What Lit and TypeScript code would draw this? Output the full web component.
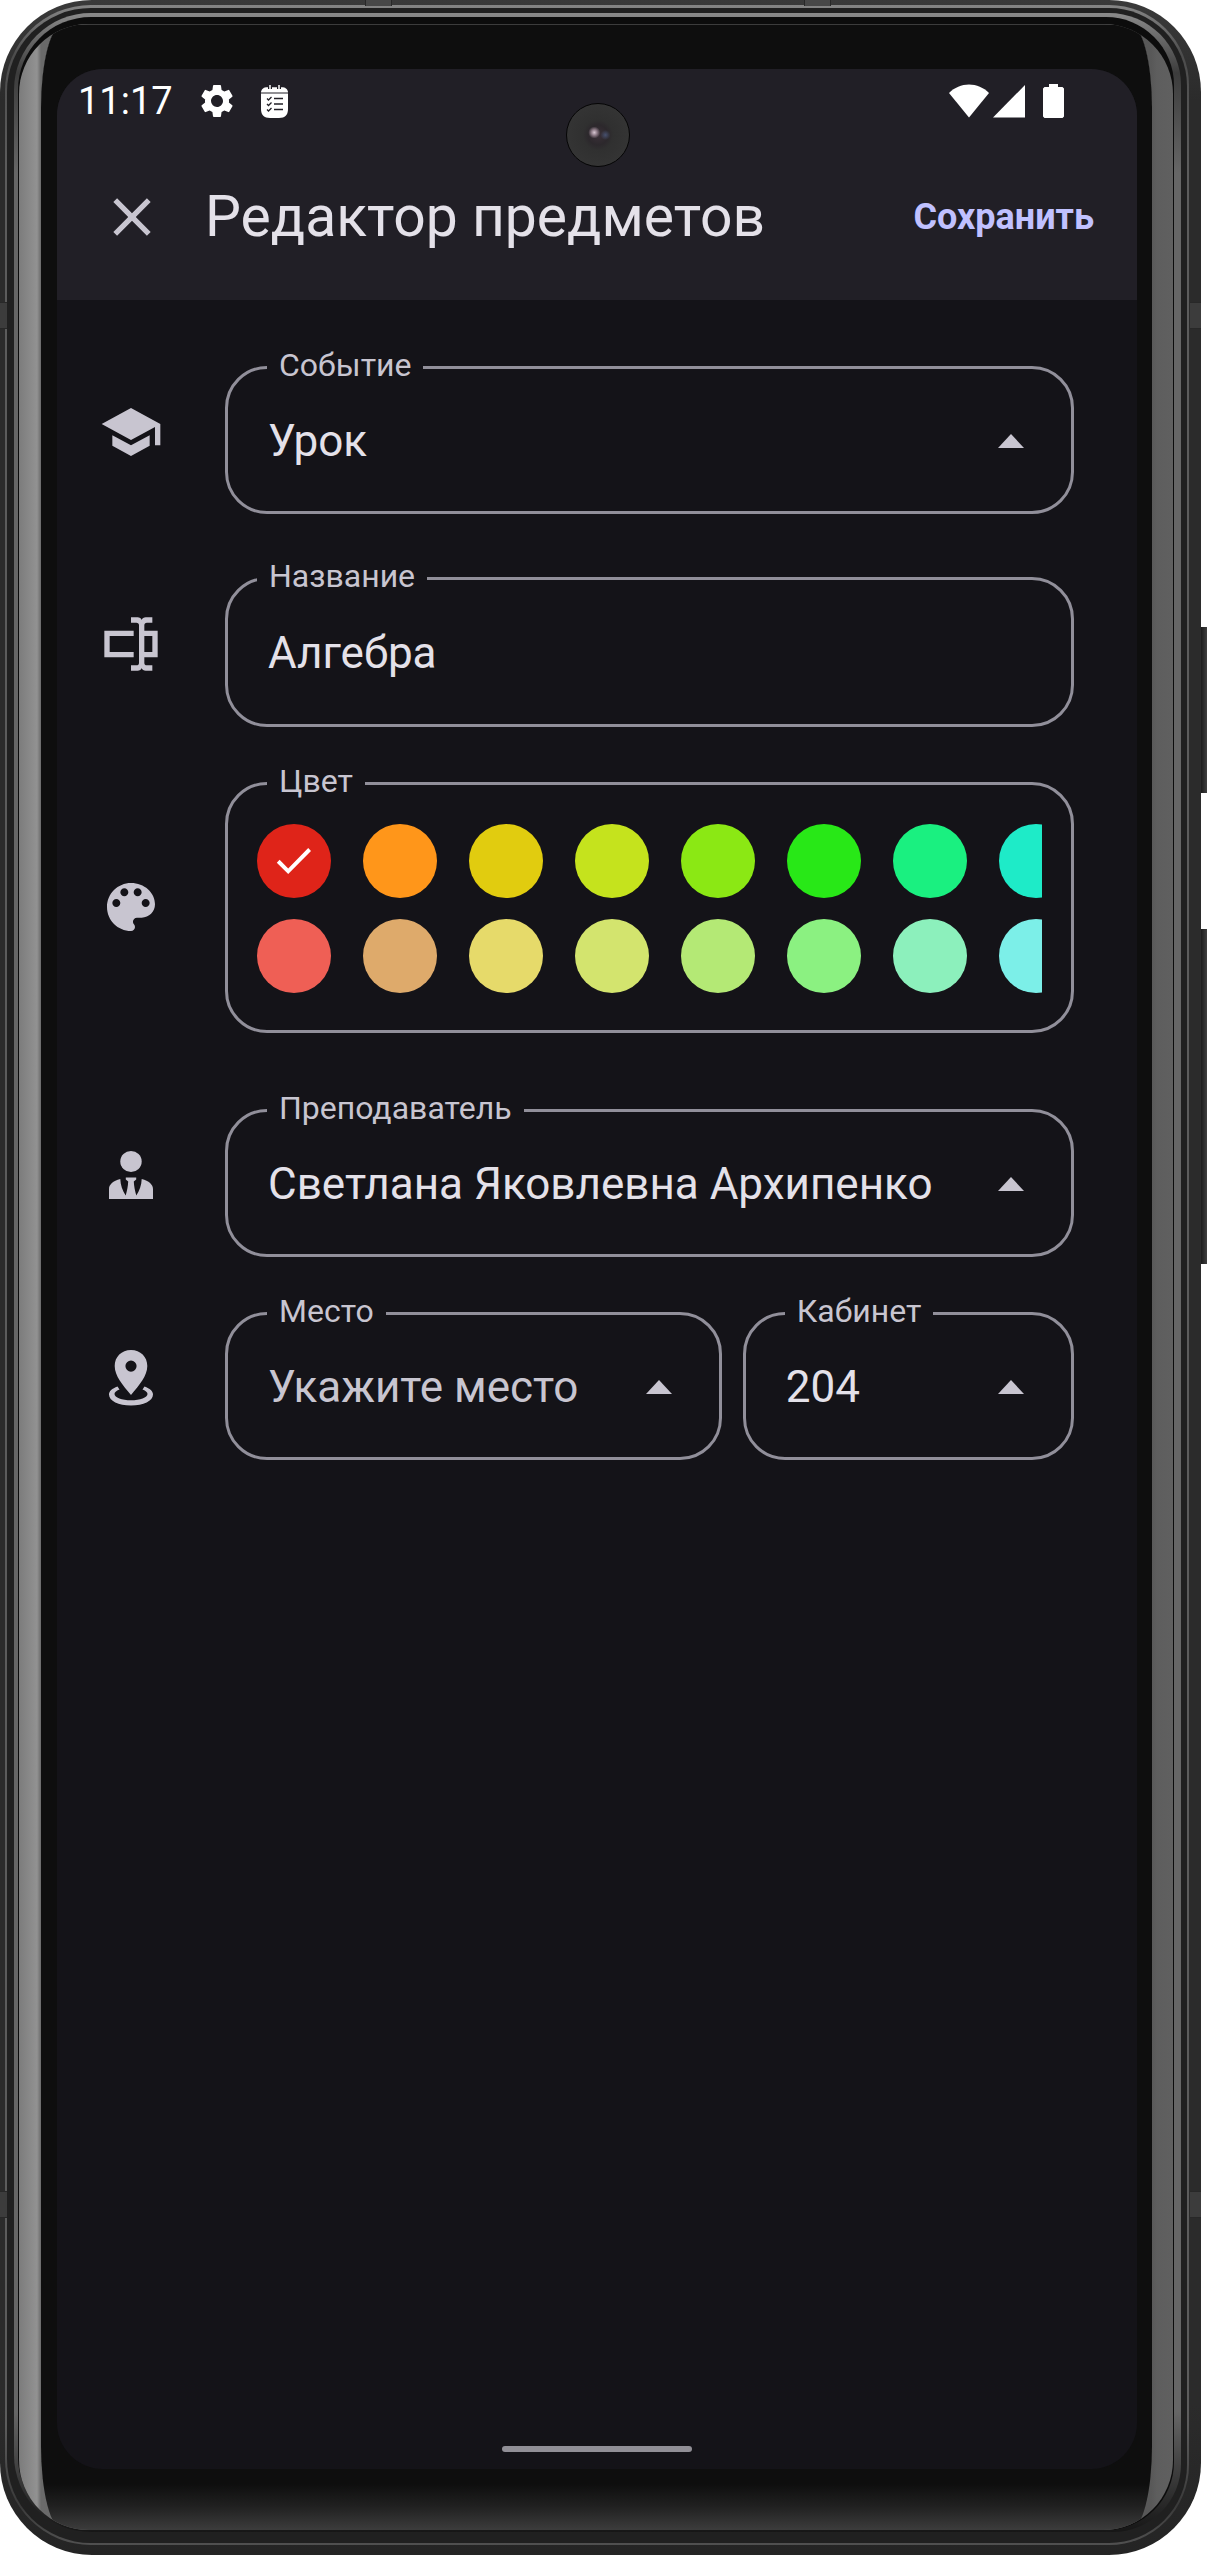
import { LitElement, html, css, svg, TemplateResult } from "lit";
import { customElement, state } from "lit/decorators.js";

const BRIGHT = ["#df2419", "#ff961a", "#e1cc0f", "#c5e31d", "#8be814", "#28e817", "#1af080", "#1eebc8"];
const PASTEL = ["#ef5f55", "#deaa6b", "#e6da6a", "#d3e46e", "#b4e975", "#8bf181", "#8cf0bc", "#7cefe8"];

const icons = {
  school: svg`<path d="M5 13.18v4L12 21l7-3.82v-4L12 17l-7-3.82zM12 3L1 9l11 6 9-4.91V17h2V9L12 3z"/>`,
  textbox: svg`<path d="M17 7h5v10h-5v2a1 1 0 0 0 1 1h2v2h-2.500C16.950 22 16 21.550 16 21c0 .550-.950 1-1.500 1H12v-2h2a1 1 0 0 0 1-1V5a1 1 0 0 0-1-1h-2V2h2.500C15.050 2 16 2.450 16 3c0-.550.950-1 1.500-1H20v2h-2a1 1 0 0 0-1 1v2M2 7h11v2H4v6h9v2H2V7m18 8V9h-3v6h3z"/>`,
  palette: svg`<path d="M12 3c-4.970 0-9 4.030-9 9s4.030 9 9 9c.830 0 1.500-.670 1.500-1.500 0-.390-.150-.740-.390-1.010-.230-.260-.380-.610-.380-.990 0-.830.670-1.500 1.500-1.500H16c2.760 0 5-2.240 5-5 0-4.420-4.030-8-9-8zm-5.500 9c-.830 0-1.500-.670-1.500-1.500S5.670 9 6.500 9 8 9.670 8 10.500 7.330 12 6.500 12zm3-4C8.670 8 8 7.330 8 6.500S8.670 5 9.500 5s1.500.670 1.500 1.500S10.330 8 9.500 8zm5 0c-.830 0-1.500-.670-1.500-1.500S13.670 5 14.500 5s1.500.670 1.500 1.500S15.330 8 14.500 8zm3 4c-.830 0-1.500-.670-1.500-1.500S16.670 9 17.500 9s1.500.670 1.500 1.500-.670 1.500-1.500 1.500z"/>`,
};

@customElement("app-root")
export class AppRoot extends LitElement {
  @state() private color = BRIGHT[0];

  static styles = css`
    :host {
      display: flex;
      min-height: 100vh;
      background: #fff;
      font-family: Roboto, "Liberation Sans", sans-serif;
      color: #e4e1e9;
    }
    * { box-sizing: border-box; }
    svg { display: block; fill: currentColor; flex: none; }

    .shell, .rim-line, .rim-dark, .rim-light, .rim-seam, .glass, .bezel, .screen {
      flex: 1;
      min-width: 0;
      display: flex;
    }
    .shell {
      position: relative;
      margin-right: 6px;
      padding: 5px 12px 10px 5px;
      border-radius: 92px;
      background: linear-gradient(#3a3a3a, #2b2b2b 100px, #2b2b2b calc(100% - 150px), #242424);
    }
    .rim-line {
      padding: 3px 2px 2px;
      border-radius: 86px 80px 80px 86px;
      background: linear-gradient(#858585, #4c4c4c 50px, #5c5c5c 160px, #5c5c5c calc(100% - 120px), #3a3a3a calc(100% - 40px), #505050);
    }
    .rim-dark {
      padding: 5px 6px 11px 7px;
      border-radius: 84px 78px 78px 84px;
      background: #202020;
    }
    .rim-light {
      padding: 4px 7px 2px 4px;
      border-radius: 77px 72px 68px 77px;
      background: linear-gradient(#8a8a8a, #3c3c3c 60px, #666 160px, #666 calc(100% - 120px), #161616);
    }
    .rim-seam {
      padding: 7px 1px 0;
      border-radius: 73px 68px 68px 73px;
      background: #0c0c0c;
    }
    .glass {
      padding: 0 21px 0 22px;
      border-radius: 70px;
      overflow: hidden;
      background: linear-gradient(90deg, #7c7c7c, #929292 18px, #6a6a6a 22px, #585858 calc(100% - 22px), #5e5e5e calc(100% - 16px), #606060);
    }
    .bezel {
      padding: 44px 15px 61px 16px;
      border-top: 1px solid #3c3c3c;
      border-radius: 22px / 84px;
      background: linear-gradient(#0e0e0e calc(100% - 46px), #202020 calc(100% - 24px), #3c3c3c);
    }
    .screen {
      flex-direction: column;
      position: relative;
      border-radius: 46px;
      overflow: hidden;
      background: #141318;
    }

    .side-key {
      position: absolute;
      left: 100%;
      width: 6px;
      background: linear-gradient(90deg, #1c1c1c, #404040);
    }
    .power { top: 627px; height: 166px; }
    .volume { top: 929px; height: 335px; }
    .band {
      position: absolute;
      background: #3c3c3c;
      border: 1px solid #282828;
    }
    .band-v { width: 7px; height: 27px; border-width: 1px 0; }
    .band-h { top: 0; width: 27px; height: 6px; background: #484848; border-width: 0 1px; }
    .at-left { left: 0; }
    .at-right { right: 0; width: 11px; }
    .upper { top: 302px; }
    .lower { bottom: 337px; }
    .near { left: 365px; }
    .far { right: 370px; }

    .camera {
      position: absolute;
      top: 34px;
      left: 50%;
      width: 64px;
      height: 64px;
      margin-left: -31px;
      border: 1px solid #050505;
      border-radius: 50%;
      background:
        radial-gradient(circle at 44% 46%, #d8c8d4 0, #8a7884 3px, transparent 6px),
        radial-gradient(circle at 62% 50%, #46506e 0, transparent 5px),
        radial-gradient(circle, #3a3038 0, #2c282c 10px, #303030 15px, #343434 31px);
    }

    .top { background: #211f26; }
    .status {
      display: flex;
      align-items: center;
      height: 64px;
      padding: 0 73px 0 21px;
      color: #fff;
      font-size: 38px;
      line-height: 44px;
    }
    .status .gear { margin-left: 24px; }
    .status .list { margin-left: 24px; }
    .status .wifi { margin-left: auto; }
    .status .battery { margin-left: 18px; }
    .status .signal { margin-left: 4px; }
    .appbar {
      display: flex;
      align-items: center;
      height: 167px;
      padding: 0 43px;
    }
    button {
      padding: 0;
      border: 0;
      background: none;
      font: inherit;
      cursor: pointer;
    }
    .close { color: #c8c5d0; }
    h1 {
      flex: 1;
      margin: 0 0 0 41px;
      font-size: 57px;
      line-height: 68px;
      font-weight: 400;
    }
    .save {
      color: #c0c1ff;
      font-size: 36px;
      line-height: 44px;
      font-weight: 700;
    }

    form { padding: 49px 63px 0 0; }
    .row {
      display: flex;
      align-items: center;
      gap: 20px;
      margin-bottom: 38px;
    }
    .row.first { margin-bottom: 46px; }
    .row.colors { margin-bottom: 59px; }
    .row.colors .lead { padding-top: 16px; }
    .lead {
      display: flex;
      justify-content: center;
      flex: none;
      width: 148px;
      color: #c8c5d0;
    }
    .fields { display: grid; flex: 1; min-width: 0; gap: 21px; }
    .fields.split { grid-template-columns: 3fr 2fr; }
    fieldset {
      min-width: 0;
      margin: 0;
      padding: 0 29px 15px;
      border: 3px solid #918f9a;
      border-radius: 42px;
    }
    legend {
      margin-left: 10px;
      padding: 0 12px 4px;
      color: #c8c5d0;
      font-size: 32px;
      line-height: 33px;
    }
    .name legend { margin-left: 0; }
    .control { display: grid; align-items: center; }
    .control > * { grid-area: 1 / 1; }
    .control svg {
      justify-self: end;
      margin-right: 18px;
      color: #c8c5d0;
      pointer-events: none;
    }
    select, input.text {
      appearance: none;
      width: 100%;
      height: 110px;
      margin: 0;
      padding: 0 0 0 11px;
      border: 0;
      outline: 0;
      background: none;
      color: #e4e1e9;
      font-family: inherit;
      font-size: 44px;
      line-height: 50px;
    }
    input.text { height: 112px; }
    select.empty { color: #c8c5d0; }
    .swatches {
      display: grid;
      grid-template-columns: repeat(8, 74px);
      gap: 21px 32px;
      padding: 22px 0;
      overflow-x: auto;
      scrollbar-width: none;
    }
    .swatch {
      display: grid;
      place-items: center;
      height: 74px;
      border-radius: 50%;
      color: #fff;
      cursor: pointer;
    }
    .swatch > * { grid-area: 1 / 1; }
    .swatch input {
      appearance: none;
      width: 74px;
      height: 74px;
      margin: 0;
      border-radius: 50%;
    }
    .home {
      width: 190px;
      height: 6px;
      margin: auto auto 17px;
      border-radius: 3px;
      background: #918f96;
    }
  `;

  private selectField(id: string, label: string, value: string, empty = false) {
    return html`<fieldset>
      <legend><label for=${id}>${label}</label></legend>
      <div class="control">
        <select id=${id} class=${empty ? "empty" : ""}>
          <option>${value}</option>
        </select>
        <svg width="26" height="14" viewBox="0 0 26 14"><path d="M0 14L13 0l13 14z"/></svg>
      </div>
    </fieldset>`;
  }

  private icon(shape: TemplateResult | unknown) {
    return html`<div class="lead">
      <svg width="64" height="64" viewBox="0 0 24 24" aria-hidden="true">${shape}</svg>
    </div>`;
  }

  private swatch(c: string) {
    return html`<label class="swatch" style="background:${c}">
      <input type="radio" name="color" aria-label=${c} .checked=${this.color === c}
        @change=${() => (this.color = c)} />
      ${this.color === c
        ? html`<svg width="36" height="28" viewBox="0 0 36 28"><path d="M12.200 21.400L3.600 12.800L.800 15.700L12.200 27L35 3.900L32.200 1z"/></svg>`
        : ""}
    </label>`;
  }

  private statusBar() {
    return html`<div class="status">
      <span>11:17</span>
      <svg class="gear" width="40" height="40" viewBox="0 0 24 24"><path d="M19.140 12.940c.040-.300.060-.610.060-.940 0-.320-.020-.640-.070-.940l2.030-1.580a.490.490 0 0 0 .120-.610l-1.920-3.320a.488.488 0 0 0-.590-.220l-2.390.960c-.500-.380-1.030-.700-1.620-.940L14.400 2.810a.484.484 0 0 0-.480-.410h-3.840c-.240 0-.430.170-.470.410L9.250 5.350c-.590.240-1.130.570-1.620.940L5.240 5.330a.480.480 0 0 0-.590.220L2.740 8.870c-.120.210-.080.470.120.610l2.030 1.580c-.050.300-.090.630-.090.940s.020.640.070.940l-2.030 1.580a.490.490 0 0 0-.120.610l1.920 3.320c.120.220.370.290.590.220l2.390-.960c.500.380 1.030.700 1.620.940l.360 2.540c.050.240.240.410.480.410h3.840c.240 0 .440-.170.470-.410l.360-2.540c.590-.240 1.130-.560 1.620-.940l2.390.960c.220.080.470 0 .590-.220l1.920-3.320a.470.470 0 0 0-.120-.610l-2.010-1.580zM12 15.600A3.610 3.610 0 0 1 8.400 12c0-1.980 1.620-3.600 3.600-3.600s3.600 1.620 3.600 3.600-1.620 3.600-3.600 3.600z"/></svg>
      <svg class="list" width="27" height="33" viewBox="0 0 27 33">
        <path d="M0 7.500C0 5 2 2.500 5 2.200h17c3 .300 5 2.800 5 5.300z"/>
        <path d="M0 8.500h27V24c0 6-3 9-9 9H9c-6 0-9-3-9-9z"/>
        <path d="M9 0v4M18 0v4" stroke="#211f26" stroke-width="4"/>
        <path d="M9 0v4.500M18 0v4.500" stroke="#fff" stroke-width="1.500"/>
        <path d="M13 13.500h9M13 19h9M13 24.500h9M6 13.500l1.500 1.500L10.500 12M6 19l1.500 1.500 3-3M6 24.500L7.500 26l3-3" fill="none" stroke="#211f26" stroke-width="1.300"/>
      </svg>
      <svg class="wifi" width="40" height="34" viewBox="0 0 40 34"><path d="M20 33.500L0 9C5.500 3.500 12.500.500 20 .500S34.500 3.500 40 9z"/></svg>
      <svg class="signal" width="32" height="34" viewBox="0 0 32 34"><path d="M0 33.500L32 1v32.500z"/></svg>
      <svg class="battery" width="21" height="34" viewBox="0 0 21 34"><path d="M6 0h9v3h4.500L21 4.500v28L19.500 34h-18L0 32.500v-28L1.500 3H6z"/></svg>
    </div>`;
  }

  private editor() {
    return html`<form @submit=${(e: Event) => e.preventDefault()}>
      <div class="row first">
        ${this.icon(icons.school)}
        <div class="fields">${this.selectField("event", "Событие", "Урок")}</div>
      </div>
      <div class="row">
        ${this.icon(icons.textbox)}
        <div class="fields">
          <fieldset class="name">
            <legend><label for="name">Название</label></legend>
            <div class="control"><input class="text" id="name" type="text" value="Алгебра" /></div>
          </fieldset>
        </div>
      </div>
      <div class="row colors">
        ${this.icon(icons.palette)}
        <div class="fields">
          <fieldset>
            <legend>Цвет</legend>
            <div class="swatches">${[...BRIGHT, ...PASTEL].map((c) => this.swatch(c))}</div>
          </fieldset>
        </div>
      </div>
      <div class="row">
        <div class="lead">
          <svg width="44" height="48" viewBox="0 0 44 48" aria-hidden="true">
            <ellipse cx="22" cy="10.500" rx="10.700" ry="10.500"/>
            <path d="M0 48V38c0-4.500 4-8 11.300-10C11.500 34 13.500 40 16.700 44.500c1.300-4.500 2.300-9.500 2.500-14L16.800 28.500v-2h10.400v2l-2.400 2c.200 4.500 1.200 9.500 2.500 14C30.500 40 32.500 34 32.700 28 40 30 44 33.500 44 38v10z"/>
          </svg>
        </div>
        <div class="fields">${this.selectField("teacher", "Преподаватель", "Светлана Яковлевна Архипенко")}</div>
      </div>
      <div class="row">
        <div class="lead">
          <svg width="44" height="56" viewBox="0 0 44 56" aria-hidden="true">
            <path fill-rule="evenodd" d="M22 0C12.500 0 5.700 6.800 5.700 16c0 10 8 19 16.300 29 8.300-10 16.300-19 16.300-29C38.300 6.800 31.500 0 22 0zm0 10.500a5.600 5.600 0 1 1 0 11.200 5.600 5.600 0 0 1 0-11.200z"/>
            <path d="M8.500 36.500C3 38.500 0 41.300 0 44.500 0 51 9.500 55.500 22 55.500S44 51 44 44.500c0-3.200-3-6-8.500-8l-2 3c3.500 1.300 5 3 5 4.500 0 3.500-7.500 6.300-16.500 6.300S5.500 47.500 5.500 44c0-1.500 1.500-3.200 5-4.500z"/>
          </svg>
        </div>
        <div class="fields split">
          ${this.selectField("place", "Место", "Укажите место", true)}
          ${this.selectField("room", "Кабинет", "204")}
        </div>
      </div>
    </form>`;
  }

  render() {
    return html`<div class="shell">
      <div class="rim-line"><div class="rim-dark"><div class="rim-light"><div class="rim-seam">
        <div class="glass"><div class="bezel">
          <main class="screen">
            <header class="top">
              ${this.statusBar()}
              <div class="appbar">
                <button class="close" type="button" aria-label="Закрыть">
                  <svg width="64" height="64" viewBox="0 0 24 24"><path d="M19 6.410L17.590 5 12 10.590 6.410 5 5 6.410 10.590 12 5 17.590 6.410 19 12 13.410 17.590 19 19 17.590 13.410 12z"/></svg>
                </button>
                <h1>Редактор предметов</h1>
                <button class="save" type="button">Сохранить</button>
              </div>
            </header>
            ${this.editor()}
            <div class="home"></div>
            <div class="camera"></div>
          </main>
        </div></div>
      </div></div></div></div>
      <div class="band band-v at-left upper"></div>
      <div class="band band-v at-right upper"></div>
      <div class="band band-v at-left lower"></div>
      <div class="band band-v at-right lower"></div>
      <div class="band band-h near"></div>
      <div class="band band-h far"></div>
      <div class="side-key power"></div>
      <div class="side-key volume"></div>
    </div>`;
  }
}
